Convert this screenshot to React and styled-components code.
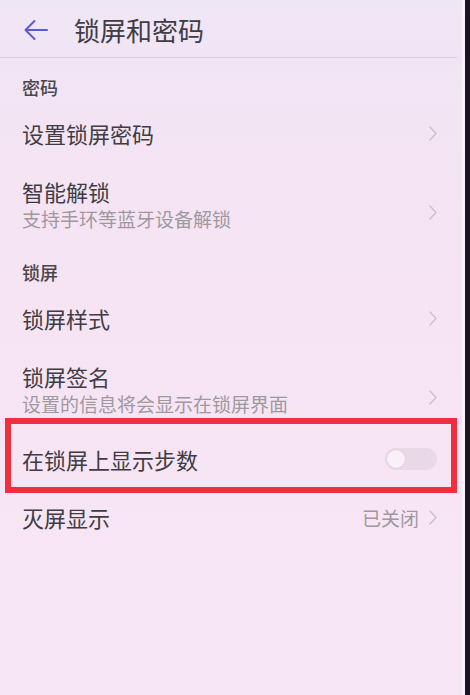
import React from "react";
import styled, { createGlobalStyle } from "styled-components";

// Colours taken from the screenshot
const colors = {
  bgTop: "#efe6f5",
  bg: "#f6e4f3",
  text: "#403c44",
  section: "#4a464c",
  sub: "#a0989f",
  chevron: "#cdc1cd",
  divider: "#dccfdc",
  accent: "#5a5ad2",
  highlight: "#ef2f3b",
  bezel: "#1c1520",
};

const GlobalStyle = createGlobalStyle`
  html, body {
    margin: 0;
    padding: 0;
    height: 100%;
    background: ${colors.bg};
  }
  body {
    font-family: "Noto Sans CJK SC", "Noto Sans", sans-serif;
    -webkit-font-smoothing: antialiased;
  }
  #root {
    height: 100%;
  }
`;

const Device = styled.div`
  display: flex;
  width: 470px;
  height: 695px;
  overflow: hidden;
`;

const Screen = styled.div`
  flex: 1;
  display: flex;
  flex-direction: column;
  background: linear-gradient(180deg, ${colors.bgTop} 0px, #f3e4f4 120px, ${colors.bg} 300px, #f7e6f5 695px);
  border-right: 3px solid rgba(255, 255, 255, 0.55);
`;

const Bezel = styled.div`
  width: 5px;
  background: ${colors.bezel};
`;

const Header = styled.header`
  display: flex;
  align-items: center;
  gap: 26px;
  height: 58px;
  padding: 3px 0 0 24px;
  box-sizing: border-box;
  margin-right: 5px;
  border-bottom: 1px solid ${colors.divider};
`;

const Title = styled.h1`
  margin: 0;
  font-size: 26px;
  font-weight: 400;
  color: ${colors.text};
  line-height: 1;
`;

const SectionTitle = styled.div`
  padding: 17px 22px 3px;
  font-size: 18px;
  line-height: 24px;
  font-weight: 500;
  color: ${colors.section};
`;

const Row = styled.div`
  position: relative;
  display: flex;
  align-items: center;
  justify-content: space-between;
  box-sizing: border-box;
  min-height: 58px;
  padding: ${(p) => (p.$twoLine ? "17px 25px 10px 22px" : "4px 25px 0 22px")};
  ${(p) =>
    p.$highlight &&
    `
    &::after {
      content: "";
      position: absolute;
      top: -10px;
      bottom: -7px;
      left: 5px;
      right: 5px;
      border: 6px solid ${colors.highlight};
      pointer-events: none;
    }
  `}
`;

const Texts = styled.div`
  display: flex;
  flex-direction: column;
`;

const Label = styled.span`
  font-size: 22px;
  line-height: 28px;
  color: ${colors.text};
`;

const Sub = styled.span`
  font-size: 19px;
  line-height: 28px;
  color: ${colors.sub};
`;

const Trailing = styled.div`
  display: flex;
  align-items: center;
  gap: 10px;
  padding-top: ${(p) => (p.$shift ? "14px" : "0")};
`;

const Value = styled.span`
  font-size: 19px;
  color: ${colors.sub};
`;

const Toggle = styled.div`
  position: relative;
  width: 52px;
  height: 22px;
  border-radius: 11px;
  background: #e9d8e6;
`;

const Knob = styled.div`
  position: absolute;
  top: 2px;
  left: 2px;
  width: 18px;
  height: 18px;
  border-radius: 50%;
  background: #faf1f8;
  box-shadow: 0 0 2px rgba(120, 90, 120, 0.15);
`;

const BackArrow = () => (
  <svg width="24" height="22" viewBox="0 0 24 22" fill="none">
    <path
      d="M23 11H1.5M10.5 2L1.5 11l9 9"
      stroke={colors.accent}
      strokeWidth="2"
      strokeLinecap="round"
      strokeLinejoin="round"
    />
  </svg>
);

const Chevron = () => (
  <svg width="8" height="15" viewBox="0 0 8 15" fill="none">
    <path
      d="M1 1l6 6.5L1 14"
      stroke={colors.chevron}
      strokeWidth="1.5"
      strokeLinecap="round"
      strokeLinejoin="round"
    />
  </svg>
);

const ListItem = ({ label, sub, value, toggle, highlight }) => (
  <Row $twoLine={!!sub} $highlight={highlight}>
    <Texts>
      <Label>{label}</Label>
      {sub ? <Sub>{sub}</Sub> : null}
    </Texts>
    {toggle ? (
      <Toggle>
        <Knob />
      </Toggle>
    ) : (
      <Trailing $shift={!!sub}>
        {value ? <Value>{value}</Value> : null}
        <Chevron />
      </Trailing>
    )}
  </Row>
);

export default function App() {
  return (
    <>
      <GlobalStyle />
      <Device>
        <Screen>
          <Header>
            <BackArrow />
            <Title>锁屏和密码</Title>
          </Header>

          <SectionTitle>密码</SectionTitle>
          <ListItem label="设置锁屏密码" />
          <ListItem label="智能解锁" sub="支持手环等蓝牙设备解锁" />

          <SectionTitle>锁屏</SectionTitle>
          <ListItem label="锁屏样式" />
          <ListItem label="锁屏签名" sub="设置的信息将会显示在锁屏界面" />
          <ListItem label="在锁屏上显示步数" toggle highlight />
          <ListItem label="灭屏显示" value="已关闭" />
        </Screen>
        <Bezel />
      </Device>
    </>
  );
}
